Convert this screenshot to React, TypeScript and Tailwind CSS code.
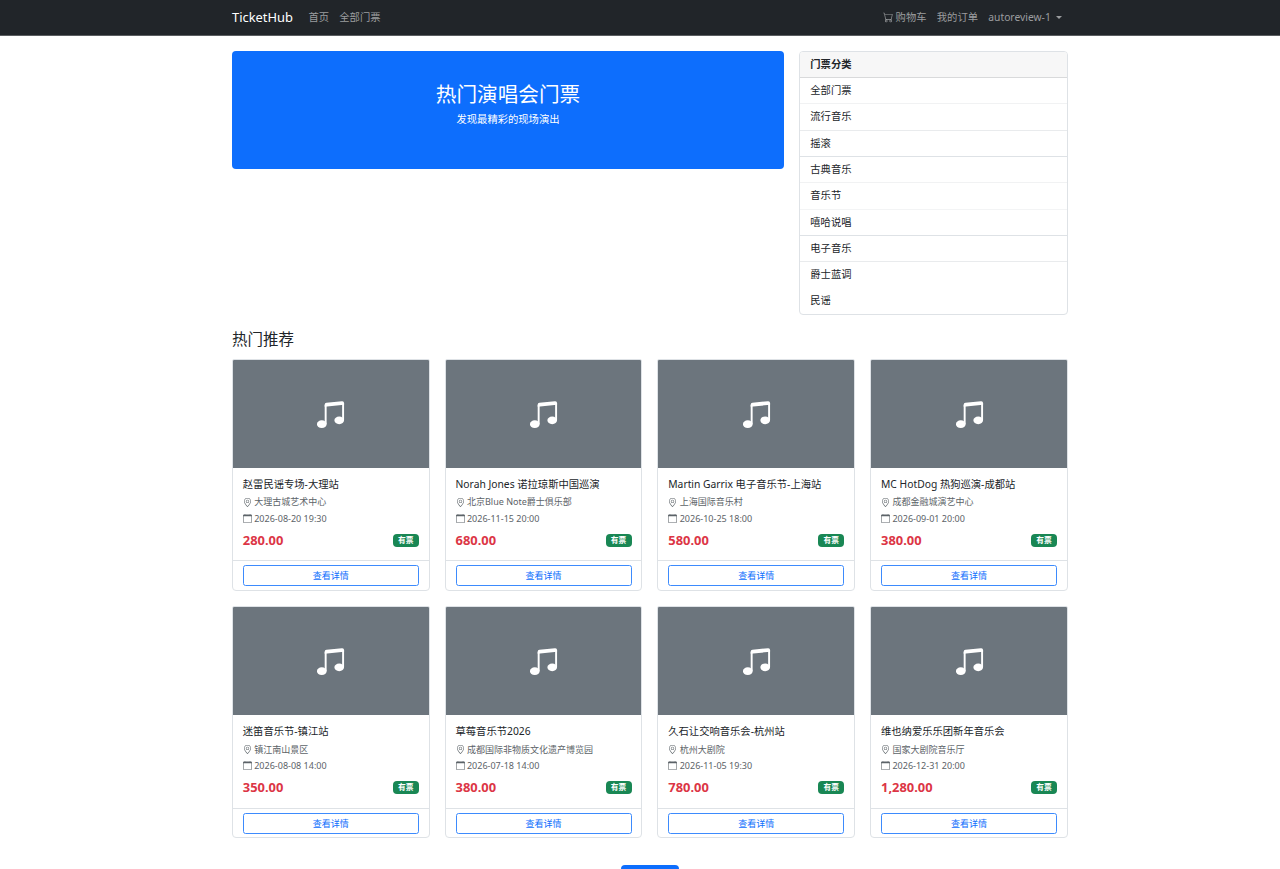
import { BsCalendar, BsCart, BsGeoAlt, BsMusicNoteBeamed } from "react-icons/bs";

interface Ticket {
  id: number;
  title: string;
  venue: string;
  date: string;
  price: string;
}

const categories = [
  { name: "全部门票", border: "border-[#f1f2f3]" },
  { name: "流行音乐", border: "border-[#e9ebed]" },
  { name: "摇滚", border: "border-[#dee2e6]" },
  { name: "古典音乐", border: "border-[#f1f2f3]" },
  { name: "音乐节", border: "border-[#f3f4f5]" },
  { name: "嘻哈说唱", border: "border-[#dee2e6]" },
  { name: "电子音乐", border: "border-[#e9ebed]" },
  { name: "爵士蓝调", border: "border-transparent" },
  { name: "民谣", border: "border-transparent" },
];

const tickets: Ticket[] = [
  { id: 1, title: "赵雷民谣专场-大理站", venue: "大理古城艺术中心", date: "2026-08-20 19:30", price: "280.00" },
  { id: 2, title: "Norah Jones 诺拉琼斯中国巡演", venue: "北京Blue Note爵士俱乐部", date: "2026-11-15 20:00", price: "680.00" },
  { id: 3, title: "Martin Garrix 电子音乐节-上海站", venue: "上海国际音乐村", date: "2026-10-25 18:00", price: "580.00" },
  { id: 4, title: "MC HotDog 热狗巡演-成都站", venue: "成都金融城演艺中心", date: "2026-09-01 20:00", price: "380.00" },
  { id: 5, title: "迷笛音乐节-镇江站", venue: "镇江南山景区", date: "2026-08-08 14:00", price: "350.00" },
  { id: 6, title: "草莓音乐节2026", venue: "成都国际非物质文化遗产博览园", date: "2026-07-18 14:00", price: "380.00" },
  { id: 7, title: "久石让交响音乐会-杭州站", venue: "杭州大剧院", date: "2026-11-05 19:30", price: "780.00" },
  { id: 8, title: "维也纳爱乐乐团新年音乐会", venue: "国家大剧院音乐厅", date: "2026-12-31 20:00", price: "1,280.00" },
];

const Navbar = () => (
  <nav className="h-9 border-b border-[#5a5d60] bg-[#212529]">
    <div className="mx-auto flex h-[35px] w-[836px] translate-x-[10px] items-center text-[10.31px] text-[#9b9d9f]">
      <a href="#" className="mr-[15.5px] text-[12.9px] text-white">TicketHub</a>
      <a href="#" className="mr-[10.3px]">首页</a>
      <a href="#">全部门票</a>
      <div className="ml-auto flex items-center gap-[10.3px] pr-[5.7px]">
        <a href="#" className="flex items-center gap-[2.7px]">
          <BsCart className="size-[10.3px]" />
          购物车
        </a>
        <a href="#">我的订单</a>
        <a href="#" className="flex items-center gap-[5.5px]">
          autoreview-1
          <span className="border-x-[3px] border-t-[3px] border-x-transparent border-t-current" />
        </a>
      </div>
    </div>
  </nav>
);

const CategoryList = () => (
  <div className="h-[264px] w-[269px] overflow-hidden rounded-[4px] border border-[#dee2e6]">
    <div className="flex h-[26.2px] items-center border-b border-[#d9dadb] bg-[#f7f7f7] pl-[10.3px] font-bold">
      门票分类
    </div>
    {categories.map((category) => (
      <a key={category.name} href="#" className={`flex h-[26.3px] items-center border-b pl-[10.3px] ${category.border}`}>
        {category.name}
      </a>
    ))}
  </div>
);

const TicketCard = ({ ticket }: { ticket: Ticket }) => (
  <div className="flex h-[231.8px] flex-col overflow-hidden rounded-t-[2px] rounded-b-[4px] border border-[#dee2e6]">
    <div className="flex h-[108px] shrink-0 items-center justify-center bg-[#6c757d] text-white">
      <BsMusicNoteBeamed className="size-[31px]" />
    </div>
    <div className="h-[92.3px] shrink-0 px-[9.8px] pt-[8.6px]">
      <h5 className="h-[17.4px] text-[10.31px] leading-[14px] whitespace-nowrap">{ticket.title}</h5>
      <p className="flex h-[16.3px] items-center gap-[2.4px] text-[9.02px] whitespace-nowrap text-[#5c6368]">
        <BsGeoAlt className="size-[9px]" />
        {ticket.venue}
      </p>
      <p className="flex h-[16.3px] items-center gap-[2.4px] text-[9.02px] whitespace-nowrap text-[#5c6368]">
        <BsCalendar className="size-[9px]" />
        {ticket.date}
      </p>
      <div className="mt-[5.2px] flex h-[17px] items-center justify-between">
        <span className="text-[12.9px] font-bold text-[#dc3545]">{ticket.price}</span>
        <span className="flex h-[13px] w-[26px] items-center justify-center rounded-[4px] bg-[#198754] text-[7.73px] font-bold text-white">
          有票
        </span>
      </div>
    </div>
    <div className="flex-1 border-t border-[#dee2e6] px-[9.8px] pt-[4.2px]">
      <button className="flex h-[20.6px] w-full items-center justify-center rounded-[2.6px] border border-[#3d8bfd] text-[9.02px] text-[#0d6efd]">
        查看详情
      </button>
    </div>
  </div>
);

const App = () => (
  <div className="h-[869px] overflow-hidden bg-white font-['Noto_Sans','Noto_Sans_CJK_SC',sans-serif] text-[10.31px] leading-[15.5px] text-[#212529]">
    <Navbar />
    <main className="mx-auto w-[836px] translate-x-[10px] pt-[15px]">
      <div className="flex items-start justify-between">
        <div className="flex h-[117.5px] w-[552px] flex-col items-center rounded-[4px] bg-[#0d6efd] pt-[31px] text-white">
          <h1 className="text-[20.63px] leading-[25px]">热门演唱会门票</h1>
          <p className="mt-[5px]">发现最精彩的现场演出</p>
        </div>
        <CategoryList />
      </div>
      <h4 className="mt-[15px] text-[15.47px] leading-[19px]">热门推荐</h4>
      <div className="mt-[10px] grid w-[835.9px] grid-cols-4 gap-x-[15.1px] gap-y-[15.7px]">
        {tickets.map((ticket) => (
          <TicketCard key={ticket.id} ticket={ticket} />
        ))}
      </div>
      <div className="mt-[26.7px] flex justify-center">
        <a href="#" className="h-[24px] w-[58px] rounded-[4px] bg-[#0d6efd]" aria-label="more" />
      </div>
    </main>
  </div>
);

export default App;
